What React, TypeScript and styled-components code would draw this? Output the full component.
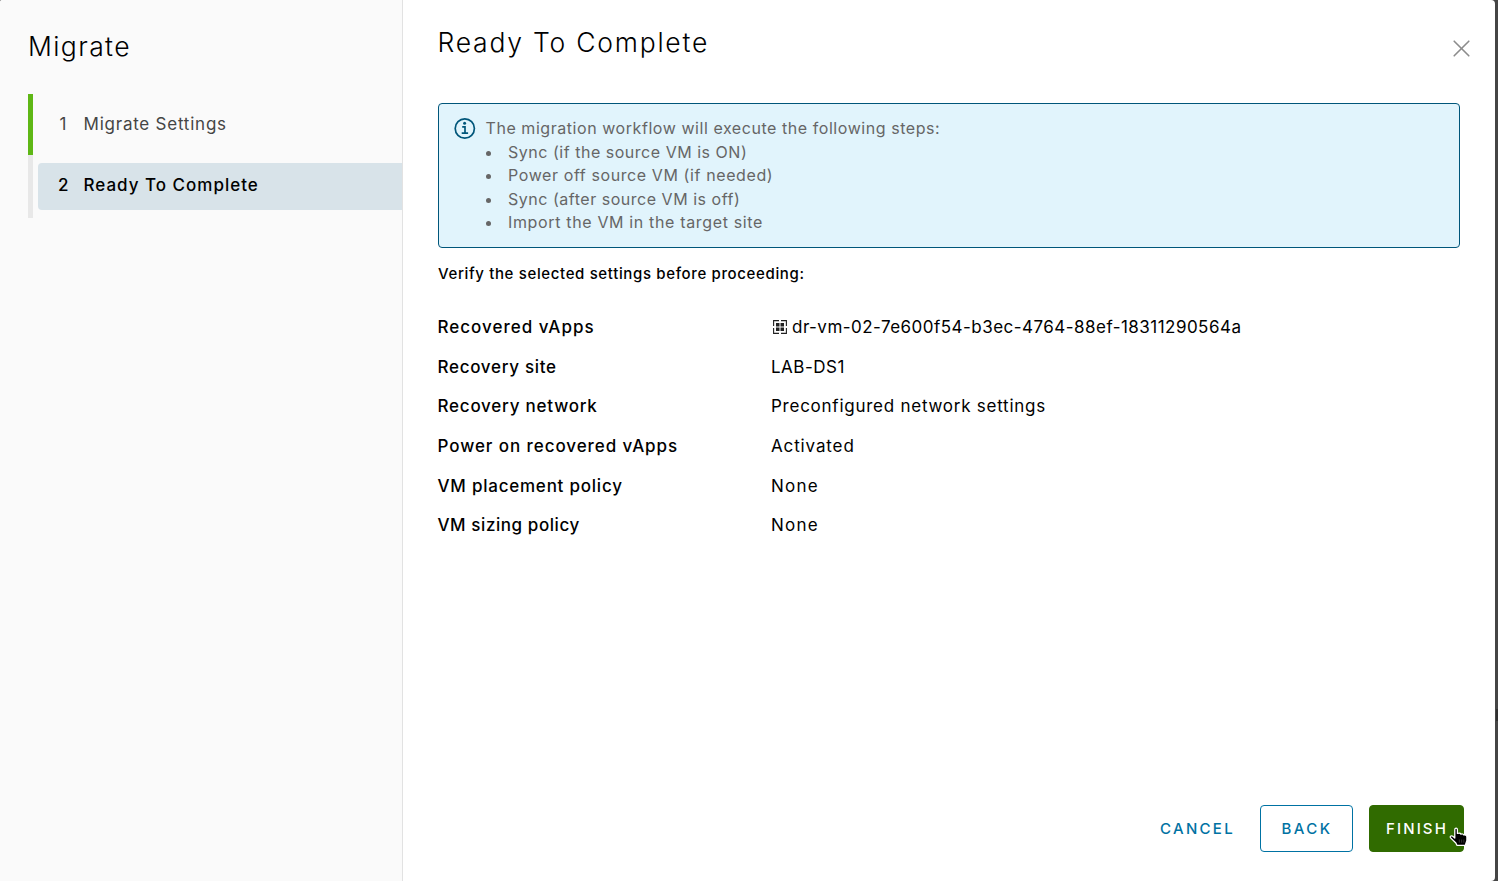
import React from "react";
import styled, { createGlobalStyle } from "styled-components";

const GlobalStyle = createGlobalStyle`
  * { box-sizing: border-box; }
  body { margin: 0; font-family: Inter, "Liberation Sans", sans-serif; color: #000; background: #fff; overflow: hidden; }
`;

const Page = styled.div`
  display: flex;
  width: 100%;
  height: 100vh;
  background: #454545;
`;

const Dialog = styled.div`
  position: relative;
  display: flex;
  flex: 1;
  background: #fff;
  border-radius: 2px 4px 4px 0;
  overflow: hidden;
`;

const Backdrop = styled.div`
  width: 3px;
  padding-top: 709px;
`;

const ScrollThumb = styled.div`
  height: 12px;
  margin-left: 1px;
  background: #303030;
`;

const Sidebar = styled.aside`
  width: 403px;
  padding: 30px 0 0 28px;
  background: #fafafa;
  border-right: 1px solid #e2e2e2;
`;

const Label = styled.span<{ $track?: number }>`
  letter-spacing: ${(p) => p.$track ?? 0}px;
  white-space: nowrap;
`;

const SidebarTitle = styled.h1`
  margin: 0 0 32px;
  font-size: 26.5px;
  line-height: 32px;
  font-weight: 300;
`;

const Step = styled.div<{ $height: number; $done?: boolean }>`
  display: flex;
  align-items: center;
  height: ${(p) => p.$height}px;
  border-left: 5px solid ${(p) => (p.$done ? "#5eb715" : "#e8e8e8")};
  padding-left: 5px;
`;

const StepButton = styled.div<{ $active?: boolean }>`
  display: flex;
  flex: 1;
  height: 47px;
  padding-left: 20px;
  border-radius: 4px 0 0 4px;
  background: ${(p) => (p.$active ? "#d8e3e9" : "transparent")};
  color: ${(p) => (p.$active ? "#000" : "#454545")};
  font-size: 17px;
  line-height: ${(p) => (p.$active ? 44 : 46)}px;
  font-weight: ${(p) => (p.$active ? 500 : 400)};
`;

const StepNumber = styled.span<{ $indent?: number }>`
  width: 25.5px;
  padding-left: ${(p) => p.$indent ?? 0}px;
`;

const Content = styled.main`
  display: flex;
  flex: 1;
  flex-direction: column;
  padding: 26px 31px 29px 35px;
`;

const Header = styled.header`
  display: flex;
  justify-content: space-between;
  height: 77px;
`;

const Title = styled.h2`
  margin: 0 0 0 -0.5px;
  font-size: 26.5px;
  line-height: 32px;
  font-weight: 300;
`;

const CloseIcon = styled.svg`
  margin: 14px -6px 0 0;
`;

const Alert = styled.section`
  display: flex;
  gap: 10px;
  width: 1022px;
  height: 145px;
  padding: 13px 14.5px;
  border: 1px solid #00567a;
  border-radius: 4px;
  background: #e1f4fc;
  color: #666;
  font-size: 16px;
`;

const AlertIntro = styled.div`
  height: 24px;
  line-height: 22px;
`;

const StepList = styled.ul`
  margin: 0;
  padding: 0;
  list-style: none;
`;

const StepItem = styled.li`
  display: flex;
  align-items: center;
  height: 23.3px;
  line-height: 23px;

  &::before {
    content: "";
    width: 5px;
    height: 5px;
    margin: 2px 17px 0 0.5px;
    border-radius: 50%;
    background: #666;
  }
`;

const Verify = styled.p`
  margin: 14px 0 29px;
  font-size: 15px;
  line-height: 24px;
  font-weight: 500;
`;

const Settings = styled.dl`
  display: grid;
  grid-template-columns: 333px auto;
  grid-auto-rows: 39.65px;
  margin: 0;
  font-size: 17px;
  line-height: 24px;
`;

const Term = styled.dt`
  margin-left: -0.5px;
  font-weight: 500;
`;

const Value = styled.dd`
  display: flex;
  margin: 0;
`;

const VAppIcon = styled.svg`
  margin: 5px 5.5px 0 1.5px;
`;

const Footer = styled.footer`
  display: flex;
  justify-content: flex-end;
  gap: 16px;
  margin-top: auto;
`;

const Button = styled.button<{ $kind: "link" | "outline" | "primary"; $width: number }>`
  width: ${(p) => p.$width}px;
  height: 47px;
  padding: 0 0 0 ${(p) => (p.$kind === "link" ? 3 : 1)}px;
  border: 1px solid ${(p) => ({ link: "transparent", outline: "#0072a3", primary: "#306b00" })[p.$kind]};
  border-radius: 4px;
  background: ${(p) => (p.$kind === "primary" ? "#306b00" : "transparent")};
  color: ${(p) => (p.$kind === "primary" ? "#fff" : "#0072a3")};
  font: 500 15px Inter, sans-serif;
`;

const Pointer = styled.svg`
  position: absolute;
  left: 1449px;
  top: 827px;
`;

const alertSteps: [string, number][] = [
  ["Sync (if the source VM is ON)", 0.52],
  ["Power off source VM (if needed)", 0.6],
  ["Sync (after source VM is off)", 0.52],
  ["Import the VM in the target site", 0.65],
];

type Setting = { term: string; termTrack: number; value: string; valueTrack: number; vapp?: boolean };

const settings: Setting[] = [
  { term: "Recovered vApps", termTrack: 1, value: "dr-vm-02-7e600f54-b3ec-4764-88ef-18311290564a", valueTrack: 0.47, vapp: true },
  { term: "Recovery site", termTrack: 0.7, value: "LAB-DS1", valueTrack: 0.5 },
  { term: "Recovery network", termTrack: 0.77, value: "Preconfigured network settings", valueTrack: 0.75 },
  { term: "Power on recovered vApps", termTrack: 0.93, value: "Activated", valueTrack: 0.87 },
  { term: "VM placement policy", termTrack: 0.77, value: "None", valueTrack: 1.2 },
  { term: "VM sizing policy", termTrack: 0.57, value: "None", valueTrack: 1.2 },
];

export default function App() {
  return (
    <Page>
      <GlobalStyle />
      <Dialog>
        <Sidebar>
          <SidebarTitle><Label $track={1.4}>Migrate</Label></SidebarTitle>
          <Step $height={61} $done>
            <StepButton>
              <StepNumber $indent={1.5}>1</StepNumber>
              <Label $track={0.77}>Migrate Settings</Label>
            </StepButton>
          </Step>
          <Step $height={63}>
            <StepButton $active>
              <StepNumber>2</StepNumber>
              <Label $track={1}>Ready To Complete</Label>
            </StepButton>
          </Step>
        </Sidebar>
        <Content>
          <Header>
            <Title><Label $track={1.77}>Ready To Complete</Label></Title>
            <CloseIcon width="17" height="17" viewBox="0 0 17 17" fill="none" stroke="#8c8c8c" strokeWidth="1.6" strokeLinecap="round">
              <path d="M1.2 1.2 15.8 15.8M15.8 1.2 1.2 15.8" />
            </CloseIcon>
          </Header>
          <Alert>
            <svg width="22" height="22" viewBox="0 0 22 22" fill="none" stroke="#00567a">
              <circle cx="10.8" cy="11.5" r="9.6" strokeWidth="1.7" />
              <circle cx="10.6" cy="6.3" r="1.5" fill="#00567a" stroke="none" />
              <path d="M8.2 9.9H11V16M7.7 16.2H14.1" strokeWidth="1.7" />
            </svg>
            <div>
              <AlertIntro><Label $track={0.555}>The migration workflow will execute the following steps:</Label></AlertIntro>
              <StepList>
                {alertSteps.map(([text, track]) => (
                  <StepItem key={text}><Label $track={track}>{text}</Label></StepItem>
                ))}
              </StepList>
            </div>
          </Alert>
          <Verify><Label $track={0.64}>Verify the selected settings before proceeding:</Label></Verify>
          <Settings>
            {settings.map((s) => (
              <React.Fragment key={s.term}>
                <Term><Label $track={s.termTrack}>{s.term}</Label></Term>
                <Value>
                  {s.vapp && (
                    <VAppIcon width="14" height="14" viewBox="0 0 14 14" fill="none" stroke="#222" strokeWidth="1.1">
                      <path d="M6 .6H.6V6M8 .6H13.4V6M.6 8V13.4H6M13.4 8V13.4H8" />
                      <path d="M3 3h3.5v3.5H3zM7.5 3H11v3.5H7.5zM3 7.5h3.5V11H3zM7.5 7.5H11V11H7.5z" fill="#222" stroke="none" />
                    </VAppIcon>
                  )}
                  <Label $track={s.valueTrack}>{s.value}</Label>
                </Value>
              </React.Fragment>
            ))}
          </Settings>
          <Footer>
            <Button $kind="link" $width={96}><Label $track={2.3}>CANCEL</Label></Button>
            <Button $kind="outline" $width={93}><Label $track={2.5}>BACK</Label></Button>
            <Button $kind="primary" $width={95}><Label $track={2.1}>FINISH</Label></Button>
          </Footer>
        </Content>
        <Pointer width="20" height="20" viewBox="0 0 19 20" preserveAspectRatio="none">
          <path d="M5.5 2.5C5.5 .7 8 .7 8 2.5V6.5C9.5 6 11 6.3 11.3 7.2 12.4 6.7 13.7 7 14 8 15.6 7.6 17 8.3 17 10V13.5L15.5 18.3H7.5L6.5 16 1.3 10.7C.6 9.2 2.4 8.4 3.6 9.2L5.5 11Z" fill="#000" stroke="#fff" strokeWidth="1.2" strokeLinejoin="round" />
          <path d="M9.8 12.5v3.2M12 12.5v3.2M14.1 12.5v3.2" stroke="#555" strokeWidth=".6" />
        </Pointer>
      </Dialog>
      <Backdrop><ScrollThumb /></Backdrop>
    </Page>
  );
}
